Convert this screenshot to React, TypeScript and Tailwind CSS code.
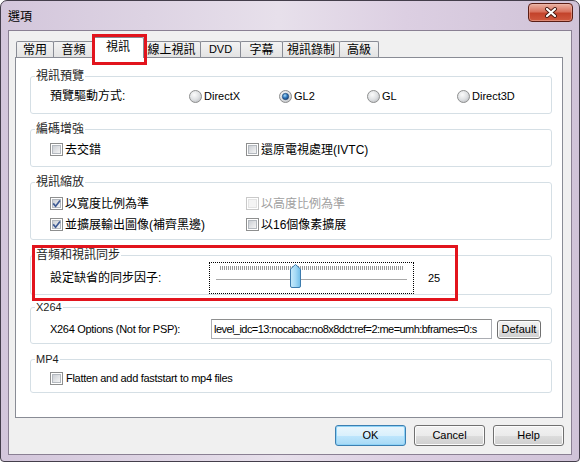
import React from "react";

type GroupProps = {
  title: string;
  latin?: boolean;
  className?: string;
  children: React.ReactNode;
};

function Group({ title, latin, className, children }: GroupProps) {
  return (
    <fieldset
      className={`relative rounded-[3px] border border-[#d5dfe5] ${className ?? ""}`}
    >
      <legend
        className={`ml-[4px] px-[1px] leading-[14px] text-[#1e1e1e] ${
          latin ? "text-[11px]" : "text-[12px]"
        }`}
      >
        {title}
      </legend>
      {children}
    </fieldset>
  );
}

function Radio({ checked }: { checked?: boolean }) {
  return (
    <svg width="13" height="13" viewBox="0 0 13 13" className="shrink-0">
      <defs>
        <radialGradient id="radioFace" cx="0.4" cy="0.35" r="0.75">
          <stop offset="0" stopColor="#fbfbfb" />
          <stop offset="0.55" stopColor="#dfe1e3" />
          <stop offset="1" stopColor="#b9bcc0" />
        </radialGradient>
        <radialGradient id="radioDot" cx="0.4" cy="0.35" r="0.7">
          <stop offset="0" stopColor="#a8dcf8" />
          <stop offset="0.5" stopColor="#3179bf" />
          <stop offset="1" stopColor="#163f72" />
        </radialGradient>
      </defs>
      <circle cx="6.5" cy="6.5" r="6" fill="url(#radioFace)" stroke="#8e8f8f" />
      {checked && <circle cx="6.5" cy="6.5" r="3.2" fill="url(#radioDot)" stroke="#1c3f6a" strokeWidth="0.6" />}
    </svg>
  );
}

function Check({ checked, disabled }: { checked?: boolean; disabled?: boolean }) {
  return (
    <svg width="13" height="13" viewBox="0 0 13 13" className="shrink-0">
      <defs>
        <linearGradient id="checkFace" x1="0" y1="0" x2="1" y2="1">
          <stop offset="0" stopColor="#c9cdd3" />
          <stop offset="1" stopColor="#f7f7f7" />
        </linearGradient>
      </defs>
      <rect x="0.5" y="0.5" width="12" height="12" fill="#ffffff" stroke={disabled ? "#c9c9c9" : "#8e8f8f"} />
      <rect
        x="2.5"
        y="2.5"
        width="8"
        height="8"
        fill={disabled ? "#f4f4f4" : "url(#checkFace)"}
        stroke={disabled ? "#e4e4e4" : "#b4b9bf"}
      />
      {checked && (
        <path d="M3.2 6.4 L5.6 9.2 L10 3.4" fill="none" stroke="#3f5b94" strokeWidth="1.7" />
      )}
    </svg>
  );
}

function RadioItem({ label, checked, className }: { label: string; checked?: boolean; className?: string }) {
  return (
    <div className={`flex shrink-0 items-center gap-[2px] text-[11px] ${className ?? ""}`}>
      <Radio checked={checked} />
      <span>{label}</span>
    </div>
  );
}

function CheckItem({
  label,
  checked,
  disabled,
  className,
}: {
  label: string;
  checked?: boolean;
  disabled?: boolean;
  className?: string;
}) {
  return (
    <div className={`flex shrink-0 items-center gap-[2px] text-[12px] ${disabled ? "text-[#a0a0a0]" : ""} ${className ?? ""}`}>
      <Check checked={checked} disabled={disabled} />
      <span>{label}</span>
    </div>
  );
}

function Slider() {
  const ticks = Array.from({ length: 92 }, (_, i) => 10 + i * 2);
  return (
    <div className="h-[32px] w-[205px] shrink-0 border border-dotted border-black">
      <svg width="203" height="30" viewBox="0 0 203 30">
        <defs>
          <linearGradient id="thumb" x1="0" y1="0" x2="1" y2="0">
            <stop offset="0" stopColor="#c9ebfb" />
            <stop offset="0.5" stopColor="#a5daf6" />
            <stop offset="1" stopColor="#6fbde9" />
          </linearGradient>
        </defs>
        {ticks.map((x) => (
          <line key={x} x1={x + 0.5} y1="3" x2={x + 0.5} y2="7" stroke="#9a9a9a" strokeWidth="1" />
        ))}
        <line x1="6" y1="16.5" x2="197" y2="16.5" stroke="#a8a8a8" />
        <line x1="6" y1="17.5" x2="197" y2="17.5" stroke="#ffffff" />
        <path
          d="M80.5 6 L85.5 1.5 L90.5 6 L90.5 23 Q90.5 24.5 89 24.5 L82 24.5 Q80.5 24.5 80.5 23 Z"
          fill="url(#thumb)"
          stroke="#3d7bad"
        />
      </svg>
    </div>
  );
}

function Button({ label, primary }: { label: string; primary?: boolean }) {
  return (
    <div
      className={`flex h-[21px] w-[71px] items-center justify-center rounded-[3px] border text-[11px] ${
        primary
          ? "border-[#3c7fb1] bg-[linear-gradient(#eaf6fd_0%,#d9f0fc_50%,#bee6fd_51%,#a7d9f5_100%)] shadow-[inset_0_0_0_1px_#8fd3f7]"
          : "border-[#707070] bg-[linear-gradient(#f2f2f2_0%,#ebebeb_50%,#dddddd_51%,#cfcfcf_100%)] shadow-[inset_0_0_0_1px_#fcfcfc]"
      }`}
    >
      {label}
    </div>
  );
}

const tabs = [
  { label: "常用", w: "w-[38px]", ml: "" },
  { label: "音頻", w: "w-[41px]", ml: "-ml-[1px]" },
  { label: "視訊", w: "w-[52px]", ml: "-ml-[2px]", selected: true },
  { label: "線上視訊", w: "w-[59px]", ml: "-ml-[2px]" },
  { label: "DVD", w: "w-[41px]", ml: "-ml-[1px]", latin: true },
  { label: "字幕", w: "w-[43px]", ml: "-ml-[1px]" },
  { label: "視訊錄制", w: "w-[58px]", ml: "-ml-[1px]" },
  { label: "高級", w: "w-[40px]", ml: "-ml-[1px]" },
];

export default function App() {
  return (
    <div className="h-[462px] w-[580px] overflow-hidden rounded-t-[7px] rounded-b-[4px] border border-[#443e4b] bg-[linear-gradient(90deg,#d3c6db_0%,#ddd3e3_25%,#e7e0eb_48%,#dccfe2_70%,#d0c3d8_100%)] font-['Liberation_Sans','Noto_Sans_CJK_TC',sans-serif] text-black">
      {/* title bar */}
      <div className="flex h-[29px] items-start justify-between pl-[7px] pr-[6px]">
        <span className="mt-[9px] text-[12px] leading-[14px]">選項</span>
        <div className="mt-[2px] flex h-[19px] w-[45px] items-center justify-center rounded-[4px] border border-[#5a1d15] bg-[linear-gradient(#eab1a3_0%,#d9725e_45%,#c3432b_55%,#d0593f_100%)] shadow-[inset_0_0_0_1px_#f0b9ab80]">
          <svg width="14" height="11" viewBox="0 0 14 11">
            <path d="M3 2 L11 9 M11 2 L3 9" stroke="#4a1a12" strokeWidth="4" strokeLinecap="round" />
            <path d="M3 2 L11 9 M11 2 L3 9" stroke="#ffffff" strokeWidth="2.2" strokeLinecap="round" />
          </svg>
        </div>
      </div>

      {/* client area */}
      <div className="mx-[7px] flex h-[425px] flex-col border border-[#8a8093] bg-[#f0f0f0]">
        <div className="flex h-[26px] items-end pl-[7px]">
          {tabs.map((t) =>
            t.selected ? (
              <div
                key={t.label}
                className={`relative z-10 -mb-[1px] flex h-[21px] items-center justify-center rounded-t-[2px] border border-b-0 border-[#898c95] bg-white pb-[2px] text-[12px] ${t.w} ${t.ml}`}
              >
                {t.label}
                <div className="pointer-events-none absolute -left-[1px] -top-[4px] h-[31px] w-[55px] border-[3px] border-[#e2141d]" />
              </div>
            ) : (
              <div
                key={t.label}
                className={`flex h-[16px] items-center justify-center rounded-t-[2px] border border-b-0 border-[#898c95] bg-[linear-gradient(#f3f3f3,#e3e3e3)] ${
                  t.latin ? "text-[11px]" : "text-[12px]"
                } ${t.w} ${t.ml}`}
              >
                {t.label}
              </div>
            )
          )}
        </div>

        <div className="ml-[6px] h-[361px] w-[548px] border border-[#898c95] bg-white pl-[14px] pr-[10px] pt-[11px]">
          <Group title="視訊預覽">
            <div className="flex h-[30px] items-center pb-[4px]">
              <span className="w-[158px] shrink-0 pl-[19px] text-[12px]">預覽驅動方式:</span>
              <RadioItem label="DirectX" className="w-[90px]" />
              <RadioItem label="GL2" checked className="w-[88px]" />
              <RadioItem label="GL" className="w-[90px]" />
              <RadioItem label="Direct3D" />
            </div>
          </Group>

          <Group title="編碼增強" className="mt-[8px]">
            <div className="flex h-[30px] items-center pb-[3px]">
              <CheckItem label="去交錯" className="w-[215px] pl-[19px]" />
              <CheckItem label="還原電視處理(IVTC)" />
            </div>
          </Group>

          <Group title="視訊縮放" className="mt-[8px]">
            <div className="h-[50px] py-[4px]">
              <div className="flex h-[21px] items-center">
                <CheckItem label="以寬度比例為準" checked className="w-[215px] pl-[19px]" />
                <CheckItem label="以高度比例為準" disabled />
              </div>
              <div className="flex h-[21px] items-center">
                <CheckItem label="並擴展輸出圖像(補齊黑邊)" checked className="w-[215px] pl-[19px]" />
                <CheckItem label="以16個像素擴展" />
              </div>
            </div>
          </Group>

          <Group title="音頻和視訊同步" className="mt-[8px]">
            <div className="flex h-[32px] items-center">
              <span className="w-[178px] shrink-0 pl-[19px] text-[12px]">設定缺省的同步因子:</span>
              <Slider />
              <span className="ml-[14px] text-[11px]">25</span>
            </div>
            <div className="pointer-events-none absolute -top-[17px] left-[1px] h-[56px] w-[426px] border-[3px] border-[#e2141d]" />
          </Group>

          <Group title="X264" latin className="mt-[5px]">
            <div className="flex h-[29px] items-center pb-[4px] pt-[5px] text-[11px]">
              <span className="w-[180px] shrink-0 pl-[19px] tracking-[-0.3px]">X264 Options (Not for PSP):</span>
              <div className="flex h-[20px] w-[281px] shrink-0 items-center overflow-hidden whitespace-nowrap border border-[#abadb3] border-t-[#8e8f8f] bg-white pl-[2px] tracking-[-0.55px]">
                level_idc=13:nocabac:no8x8dct:ref=2:me=umh:bframes=0:s
              </div>
              <div className="ml-[5px] flex h-[19px] w-[44px] items-center justify-center rounded-[3px] border border-[#707070] bg-[linear-gradient(#f2f2f2_0%,#ebebeb_50%,#dddddd_51%,#cfcfcf_100%)] shadow-[inset_0_0_0_1px_#fcfcfc]">
                Default
              </div>
            </div>
          </Group>

          <Group title="MP4" latin className="mt-[8px]">
            <div className="flex h-[26px] items-center pb-[2px] pl-[19px] text-[11px]">
              <div className="flex items-center gap-[3px]">
                <Check />
                <span className="tracking-[-0.3px]">Flatten and add faststart to mp4 files</span>
              </div>
            </div>
          </Group>
        </div>

        <div className="mt-[7px] flex justify-end gap-[8px] pr-[7px]">
          <Button label="OK" primary />
          <Button label="Cancel" />
          <Button label="Help" />
        </div>
      </div>
    </div>
  );
}
